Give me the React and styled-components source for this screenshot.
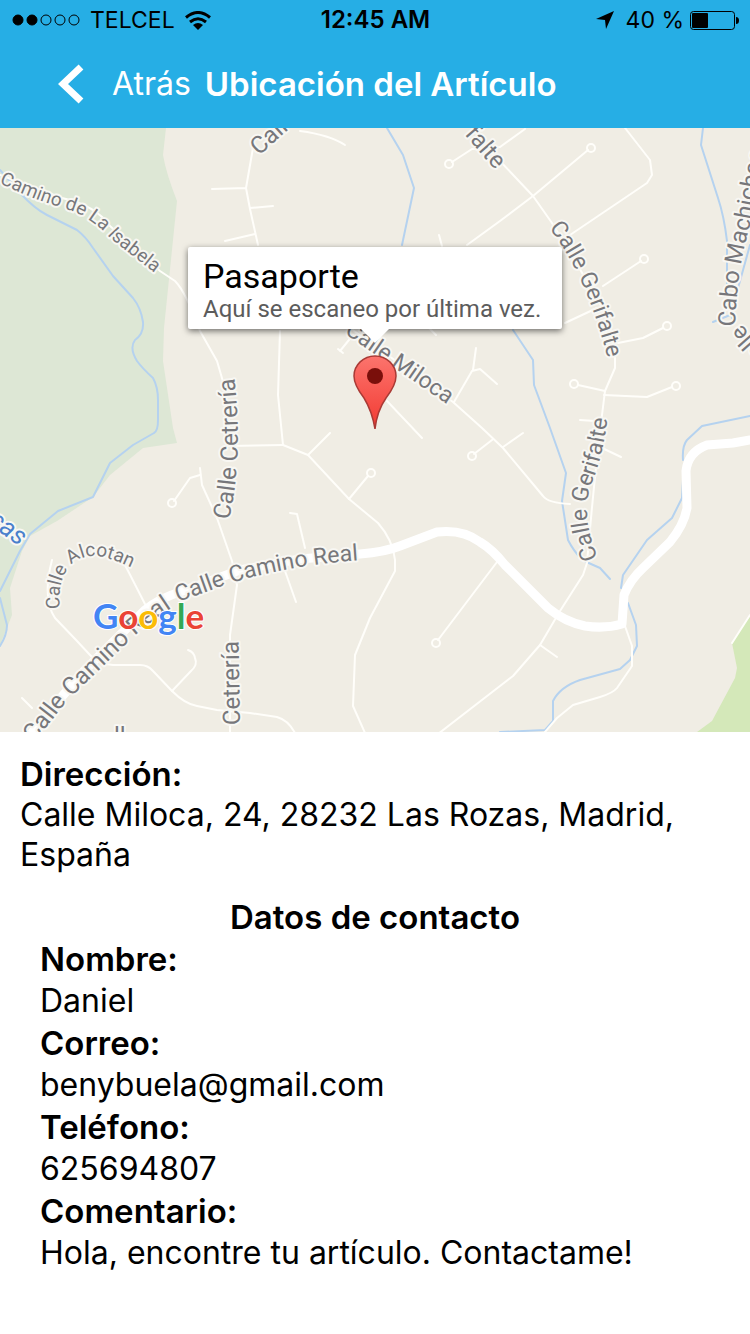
import React from "react";
import styled, { createGlobalStyle } from "styled-components";

const GlobalStyle = createGlobalStyle`
  *, *::before, *::after { box-sizing: border-box; }
  body {
    margin: 0;
    background: #fff;
    color: #000;
    font-family: Inter, "Liberation Sans", sans-serif;
  }
`;

const Screen = styled.div`
  display: flex;
  flex-direction: column;
  min-height: 100vh;
`;

const TopBar = styled.header`
  background: #26aee5;
`;

const StatusBar = styled.div`
  display: grid;
  grid-template-columns: 1fr auto 1fr;
  align-items: center;
  height: 40px;
  padding: 0 11px 0 12px;
  font-size: 23px;
  line-height: 40px;
`;

const StatusGroup = styled.div`
  display: flex;
  align-items: center;
  justify-content: ${(p) => (p.$end ? "flex-end" : "flex-start")};
  gap: ${(p) => (p.$end ? 6 : 10)}px;
`;

const Clock = styled.time`
  font-size: 24px;
  font-weight: 600;
`;

const Percent = styled.span`
  margin-left: 6px;
`;

const NavBar = styled.nav`
  display: flex;
  align-items: center;
  gap: 14px;
  height: 88px;
  padding-left: 58px;
`;

const BackButton = styled.button`
  display: flex;
  align-items: center;
  gap: 28px;
  padding: 0;
  border: 0;
  background: none;
  color: #fff;
  font: 400 32px/40px Inter, "Liberation Sans", sans-serif;
  cursor: pointer;
`;

const NavTitle = styled.h1`
  margin: 0;
  color: #fff;
  font-size: 33px;
  line-height: 40px;
  font-weight: 600;
`;

const MapArea = styled.section`
  position: relative;
  height: 604px;
  overflow: hidden;
  background: #f0ede4;
`;

const MapCanvas = styled.svg`
  display: block;
  width: 100%;
  height: 100%;
`;

const Callout = styled.div`
  position: absolute;
  top: 119px;
  left: 50%;
  transform: translateX(-50%);
  width: 374px;
  height: 82px;
  padding: 9px 15px;
  border-radius: 2px;
  background: #fff;
  box-shadow: 0 2px 6px rgba(0, 0, 0, 0.55);
  font-family: Roboto, sans-serif;
  white-space: nowrap;

  &::after {
    content: "";
    position: absolute;
    top: 100%;
    left: 50%;
    margin-left: -14px;
    border: 14px solid transparent;
    border-top-color: #fff;
    border-bottom: 0;
  }
`;

const CalloutTitle = styled.h2`
  margin: 0;
  font-size: 34px;
  line-height: 40px;
  font-weight: 400;
`;

const CalloutText = styled.p`
  margin: 0;
  color: #5c5c5c;
  font-size: 24px;
  line-height: 26px;
`;

const Details = styled.main`
  padding: 21px 20px;
  font-size: 32px;
  line-height: 42px;
`;

const Label = styled.dt`
  font-size: 33px;
  font-weight: 600;
`;

const Value = styled.dd`
  margin: 0;
  line-height: ${(p) => (p.$wrapped ? 40 : 42)}px;
`;

const Address = styled.dl`
  margin: 0 0 21px;
`;

const SectionTitle = styled.h2`
  margin: 0;
  font-size: 33px;
  line-height: 42px;
  font-weight: 600;
  text-align: center;
`;

const Contact = styled.dl`
  margin: 0;
  padding: 0 20px;
`;

const minorRoads = [
  "M0 175L62 198Q95 205 110 226L160 271L175 281Q186 292 200 331L217 361L224 385Q232 430 228 446",
  "M200 468L202 485L217 518L232 561L237 585L230 635V732",
  "M200 475L190 478L174 501",
  "M123 561L147 608",
  "M52 560Q42 598 55 618L77 641L90 655Q98 664 113 665H140Q148 665 153 671L172 691Q185 704 197 706L217 710L250 713L277 717Q288 720 295 733",
  "M172 691L191 671Q198 665 195 658Q194 652 188 650",
  "M212 189L246 188M253 148L246 188L250 209L258 245M250 208L273 206M225 241L255 234",
  "M300 131Q330 135 345 145",
  "M280 331L278 395L283 445L308 455L349 499L378 523Q393 540 395 560V571L370 618L355 655L353 706L365 733",
  "M228 446L283 445M308 455L330 433M349 499L368 476",
  "M290 513L297 514L305 548M285 571L296 602",
  "M387 401L422 438M340 351L353 335M338 349L343 353M428 327L436 335",
  "M350 328L453 402L482 428L503 448L543 496Q548 503 570 504M492 440L474 454M503 447L523 433",
  "M454 402L472 371L480 369L497 384M473 370L476 348",
  "M452 162L472 149L500 147L525 129M485 146L500 161L533 196L552 223Q590 285 609 320L615 358V368L605 391L602 415Q594 480 587 563L583 575L560 611L540 645L513 676L500 686L438 734",
  "M540 645L557 657M588 150L533 196L500 221L467 245M439 235L442 246",
  "M625 128L650 160L652 175L647 183L570 235M641 261L603 286M565 323L597 308",
  "M663 328L643 338L618 343M578 385L605 391M604 395L647 397L672 387M580 420L595 421M600 447L621 457",
  "M625 626L632 646V666L617 688Q613 693 600 697L573 705L557 718L545 732",
  "M497 562L438 640M750 615L732 643M22 698L32 708",
];

const roadEnds = [
  [172, 503], [371, 473], [472, 456], [449, 164], [591, 148], [644, 259],
  [667, 326], [574, 384], [676, 386], [436, 643],
];

const streams = [
  "M0 170L20 193Q35 209 47 215L77 230Q86 237 93 248L113 276L133 298Q141 308 143 322Q144 334 135 340Q129 348 137 361Q142 368 153 378Q158 387 158 400V420Q158 431 154 433L133 445L110 463L93 497L58 511L30 534L20 551L0 591M0 598L7 625Q7 635 0 646",
  "M387 128L403 155L414 188L402 245M513 330L533 360L534 385L550 428L566 473L562 501L568 540Q573 550 582 560L600 568L610 579",
  "M703 128L701 145L718 198Q724 216 727 241V290L732 318M750 245L740 281L730 315L713 322M750 416L702 426L687 440Q682 446 683 460",
  "M683 480L682 498L672 518L647 540L623 575L621 588M628 603L636 625L637 646L630 660L620 669L580 680Q560 687 553 701V721L545 730L500 732",
];

const streets = [
  { id: "isabela", d: "M-1 183Q35 200 63 208Q89 215 110 238L175 289", text: "Camino de La Isabela", size: 19 },
  { id: "cetreria", d: "M229 520Q245 450 232 360", text: "Calle Cetrería", size: 24 },
  { id: "cetreria-sur", d: "M240 725L238 600", text: "Cetrería", size: 24 },
  { id: "real-este", d: "M178 602L225 585Q300 561 390 559", text: "Calle Camino Real", size: 23 },
  { id: "real-oeste", d: "M34 743L66 702L127 643Q145 624 190 596", text: "Calle Camino Real", size: 24 },
  { id: "alcotan", d: "M60 609C56 575 72 556 94 556Q108 555 150 577", text: "Calle Alcotan", size: 19 },
  { id: "norte", d: "M259 156L310 110", text: "Calle Cetrería", size: 24 },
  { id: "miloca", d: "M344 333L480 427", text: "Calle Miloca", size: 23 },
  { id: "gerifalte-norte", d: "M464 134L510 187", text: "falte", size: 24 },
  { id: "gerifalte", d: "M549 228Q592 282 614 385", text: "Calle Gerifalte", size: 23 },
  { id: "gerifalte-sur", d: "M598 558Q578 510 594 478Q606 445 610 395", text: "Calle Gerifalte", size: 23 },
  { id: "machichaco-calle", d: "M775 362L735 317", text: "Calle", size: 23 },
  { id: "machichaco", d: "M735 327Q737 270 750 225L770 120", text: "Cabo Machichaco", size: 24 },
  { id: "calle-sur", d: "M114 744H160", text: "ll", size: 24 },
];

const google = [
  ["G", "#4285f4"], ["o", "#ea4335"], ["o", "#fbbc05"],
  ["g", "#4285f4"], ["l", "#34a853"], ["e", "#ea4335"],
];

const StreetMap = () => (
  <MapCanvas viewBox="0 128 750 604" preserveAspectRatio="xMidYMid slice" role="img" aria-label="Mapa">
    <defs>
      <linearGradient id="pin" x1="0" y1="0" x2="0" y2="1">
        <stop offset="0" stopColor="#fc746d" />
        <stop offset="1" stopColor="#f23a32" />
      </linearGradient>
      {streets.map((s) => <path key={s.id} id={s.id} d={s.d} />)}
    </defs>
    <rect y="128" width="750" height="604" fill="#f0ede4" />
    <path fill="#dde7d5" d="M0 128H166L163 155Q166 173 177 201L164 328L163 361L173 428L177 443L143 448L110 475L93 497L57 521L30 536L22 551L10 588L12 615L7 628L0 645Z" />
    <path fill="#d4e8b9" d="M750 616L732 643L737 668L735 678L712 721L697 732H750Z" />
    <g fill="none" strokeLinejoin="round" strokeLinecap="round">
      <g stroke="#b5d2ef" strokeWidth="2">{streams.map((d) => <path key={d} d={d} />)}</g>
      <g stroke="#fffefa" strokeWidth="2">
        {minorRoads.map((d) => <path key={d} d={d} />)}
        {roadEnds.map(([x, y]) => <circle key={`${x}-${y}`} cx={x} cy={y} r="4" />)}
      </g>
      <path stroke="#fff" strokeWidth="9" d="M30 735L80 675L145 610Q160 598 180 592L240 570L300 559L360 554Q385 552 400 546L437 532Q463 529 480 542Q492 549 505 565L548 608Q565 622 585 626Q605 629 622 624L624 595Q630 580 643 568L670 542Q684 525 687 508L686 471Q688 452 707 445L733 443L750 440" />
    </g>
    <g fill="#77777b" stroke="#f8f7f3" strokeWidth="4" strokeLinejoin="round" paintOrder="stroke" fontFamily="Roboto, sans-serif">
      {streets.map((s) => (
        <text key={s.id} fontSize={s.size}><textPath href={`#${s.id}`}>{s.text}</textPath></text>
      ))}
      <text fontSize="26" fontStyle="italic" fill="#4a80cc" transform="translate(-13 523) rotate(36)">cas</text>
    </g>
    <text x="93" y="629" fontFamily="Lato, sans-serif" fontSize="35" fontWeight="700" stroke="#fff" strokeWidth="2" paintOrder="stroke">
      {google.map(([ch, fill], i) => <tspan key={i} fill={fill}>{ch}</tspan>)}
    </text>
    <path d="M375 429Q372 411 364 398Q354 385 354 376A21 20 0 0 1 396 376Q396 385 386 398Q377 411 375 429Z" fill="url(#pin)" stroke="#a93a35" strokeWidth="1.500" />
    <circle cx="375" cy="376" r="8" fill="#7a0f0b" />
  </MapCanvas>
);

const SignalDots = () => (
  <svg width="68" height="12" viewBox="0 0 68 12" aria-hidden="true">
    {[0, 1, 2, 3, 4].map((i) => (
      <circle key={i} cx={6 + i * 14} cy="6" r="5" stroke="#000" strokeWidth="1" fill={i < 2 ? "#000" : "none"} />
    ))}
  </svg>
);

const WifiIcon = () => (
  <svg width="26" height="19" viewBox="0 0 26 19" fill="none" stroke="#000" strokeWidth="3" aria-hidden="true">
    <path d="M1 6.500Q13 -3.500 25 6.500" />
    <path d="M5 11Q13 4.500 21 11" />
    <path d="M8 14Q13 9.800 18 14L13 19Z" fill="#000" stroke="none" />
  </svg>
);

const LocationIcon = () => (
  <svg width="18" height="18" viewBox="0 0 18 18" aria-hidden="true">
    <path d="M18 0L10 18L9 9L0 8Z" />
  </svg>
);

const BatteryIcon = () => (
  <svg width="49" height="19" viewBox="0 0 49 19" aria-hidden="true">
    <rect x="0.500" y="0.500" width="44" height="18" rx="3" fill="none" stroke="#000" />
    <rect x="2" y="2" width="16" height="15" rx="1" />
    <path d="M46 6Q49 6 49 9.500T46 13Z" />
  </svg>
);

const BackIcon = () => (
  <svg width="26" height="40" viewBox="0 0 26 40" aria-hidden="true">
    <path d="M23 3L5 20L23 37" fill="none" stroke="#fff" strokeWidth="7" />
  </svg>
);

const contact = [
  ["Nombre:", "Daniel"],
  ["Correo:", "benybuela@gmail.com"],
  ["Teléfono:", "625694807"],
  ["Comentario:", "Hola, encontre tu artículo. Contactame!"],
];

export default function App() {
  return (
    <Screen>
      <GlobalStyle />
      <TopBar>
        <StatusBar>
          <StatusGroup>
            <SignalDots />
            <span>TELCEL</span>
            <WifiIcon />
          </StatusGroup>
          <Clock>12:45 AM</Clock>
          <StatusGroup $end>
            <LocationIcon />
            <Percent>40 %</Percent>
            <BatteryIcon />
          </StatusGroup>
        </StatusBar>
        <NavBar>
          <BackButton type="button"><BackIcon />Atrás</BackButton>
          <NavTitle>Ubicación del Artículo</NavTitle>
        </NavBar>
      </TopBar>
      <MapArea>
        <StreetMap />
        <Callout>
          <CalloutTitle>Pasaporte</CalloutTitle>
          <CalloutText>Aquí se escaneo por última vez.</CalloutText>
        </Callout>
      </MapArea>
      <Details>
        <Address>
          <Label>Dirección:</Label>
          <Value $wrapped>Calle Miloca, 24, 28232 Las Rozas, Madrid, España</Value>
        </Address>
        <SectionTitle>Datos de contacto</SectionTitle>
        <Contact>
          {contact.map(([label, value]) => (
            <React.Fragment key={label}>
              <Label>{label}</Label>
              <Value>{value}</Value>
            </React.Fragment>
          ))}
        </Contact>
      </Details>
    </Screen>
  );
}
